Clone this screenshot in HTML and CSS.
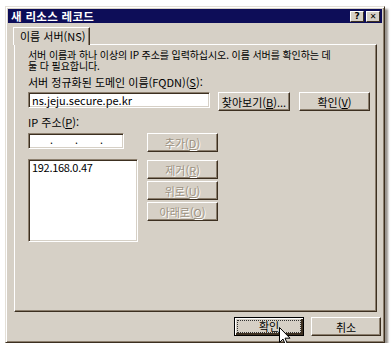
FILE: index.html
```html
<!DOCTYPE html>
<html lang="ko">
<head>
	<meta charset="UTF-8">
	<title>새 리소스 레코드</title>
	<link rel="stylesheet" href="styles.css">
</head>
<body>
	<div class="window">
		<div class="titlebar">
			<span class="title">새 리소스 레코드</span>
			<div class="tb-btns">
				<span class="tb-btn">?</span>
				<span class="tb-btn close">&#x2715;</span>
			</div>
		</div>
		<div class="tabs">
			<div class="tab">이름 서버(NS)</div>
		</div>
		<div class="panel">
			<p class="desc">서버 이름과 하나 이상의 IP 주소를 입력하십시오. 이름 서버를 확인하는 데<br>둘 다 필요합니다.</p>
			<div class="label">서버 정규화된 도메인 이름(FQDN)(<u>S</u>):</div>
			<div class="fqdn-row">
				<div class="field fqdn">ns.jeju.secure.pe.kr</div>
				<button class="btn browse">찾아보기(<u>B</u>)...</button>
				<button class="btn check">확인(<u>V</u>)</button>
			</div>
			<div class="label">IP 주소(<u>P</u>):</div>
			<div class="ip-area">
				<div class="ip-left">
					<div class="field ip"><span>.</span><span>.</span><span>.</span></div>
					<div class="field list">192.168.0.47</div>
				</div>
				<div class="ip-btns">
					<button class="btn off add">추가(<u>D</u>)</button>
					<button class="btn off">제거(<u>R</u>)</button>
					<button class="btn off">위로(<u>U</u>)</button>
					<button class="btn off">아래로(<u>O</u>)</button>
				</div>
			</div>
		</div>
		<div class="footer">
			<button class="btn default"><span class="focus">확인</span></button>
			<button class="btn">취소</button>
		</div>
		<svg class="cursor" width="12" height="19" viewBox="0 0 12 19">
			<path d="M0.5 0.5 L0.5 15.5 L4 12 L6.5 18 L8.5 17 L6 11.2 L11 11.2 Z" fill="#fff" stroke="#000" stroke-width="1"/>
		</svg>
	</div>
</body>
</html>
```

FILE: styles.css
```css
body{
	margin:0;
	background:#fff;
	font-family:"Noto Sans CJK KR","Noto Sans",sans-serif;
	font-size:10.5px;
	color:#000;
}
.window{
	position:relative;
	margin:6px 0 0 5px;
	width:380px;
	height:337px;
	box-sizing:border-box;
	padding:2px;
	background:#d6d0c6;
	border:1px solid;
	border-color:#e4e0d8 #3c2f20 #3c2f20 #e4e0d8;
	box-shadow:inset 1px 1px #fff, inset -1px -1px #8c7f6e, 3px 3px 2px rgba(70,60,50,.55);
	display:flex;
	flex-direction:column;
}
.titlebar{
	height:14px;
	background:#0d0d58;
	display:flex;
	align-items:center;
	justify-content:space-between;
	padding:0 2px 0 3px;
}
.title{
	color:#fff;
	font-weight:bold;
	font-size:11.5px;
	line-height:14px;
	letter-spacing:0.3px;
}
.tb-btns{
	display:flex;
	gap:2px;
}
.tb-btn{
	width:14px;
	height:11px;
	box-sizing:border-box;
	background:#d6d0c6;
	border:1px solid;
	border-color:#fff #3c2f20 #3c2f20 #fff;
	font-family:"DejaVu Sans",sans-serif;
	font-weight:bold;
	font-size:9px;
	line-height:9px;
	text-align:center;
}
.tb-btn.close{
	font-size:8px;
}
.tabs{
	margin-top:4px;
	padding-left:5px;
	display:flex;
	position:relative;
	z-index:1;
}
.tab{
	height:18px;
	width:77px;
	box-sizing:border-box;
	margin-bottom:-1px;
	background:#d6d0c6;
	border:1px solid;
	border-bottom:none;
	border-color:#fff #3c2f20 #d6d0c6 #fff;
	box-shadow:inset -1px 0 #8c7f6e;
	line-height:16px;
	padding-left:6px;
	font-size:11px;
}
.panel{
	height:268px;
	margin:0 5px 0 6px;
	box-sizing:border-box;
	border:1px solid;
	border-color:#fff #3c2f20 #3c2f20 #fff;
	box-shadow:inset -1px -1px #8c7f6e;
	padding:4px 0 0 13px;
}
.desc{
	margin:0;
	font-size:10px;
	line-height:11px;
	letter-spacing:-0.1px;
}
.label{
	margin-top:5px;
	line-height:12px;
	font-size:11px;
}
u{
	text-decoration:underline;
	text-underline-offset:1px;
}
.field{
	background:#fff;
	box-sizing:border-box;
	border:1px solid;
	border-color:#8c7f6e #fff #fff #8c7f6e;
	box-shadow:inset 1px 1px #3c2f20, inset -1px -1px #d6d0c6;
}
.fqdn-row{
	display:flex;
	align-items:flex-start;
	margin-top:4px;
}
.fqdn{
	width:182px;
	height:16px;
	line-height:14px;
	padding-left:3px;
	font-size:11px;
}
.btn{
	font-family:inherit;
	font-size:11px;
	color:#000;
	height:19px;
	box-sizing:border-box;
	padding:0;
	background:#d6d0c6;
	border:1px solid;
	border-color:#fff #3c2f20 #3c2f20 #fff;
	box-shadow:inset -1px -1px #8c7f6e;
	line-height:16px;
	text-align:center;
}
.browse{
	width:72px;
	margin-left:8px;
}
.check{
	width:71px;
	margin-left:9px;
}
.ip-area{
	display:flex;
	margin-top:5px;
}
.ip-left{
	display:flex;
	flex-direction:column;
	gap:10px;
	width:110px;
}
.ip{
	width:96px;
	height:16px;
	display:flex;
	justify-content:space-between;
	padding:0 20px 0 21px;
	line-height:12px;
}
.list{
	height:83px;
	padding:1px 3px;
	line-height:12px;
	font-size:11px;
	letter-spacing:-0.3px;
}
.ip-btns{
	display:flex;
	flex-direction:column;
	gap:2px;
	margin-left:9px;
}
.ip-btns .btn{
	width:71px;
	height:19px;
}
.ip-btns .add{
	margin-bottom:6px;
}
.btn.off{
	color:#9c9282;
	text-shadow:1px 1px #fff;
}
.footer{
	display:flex;
	justify-content:flex-end;
	gap:7px;
	margin-top:5px;
	padding-right:1px;
}
.footer .btn{
	width:70px;
}
.footer .btn.default{
	border:1px solid #000;
	box-shadow:inset 1px 1px #fff, inset -2px -2px #3c2f20;
	padding:2px;
}
.focus{
	display:block;
	height:13px;
	line-height:12px;
	outline:1px dotted #333;
	outline-offset:-1px;
}
.cursor{
	position:absolute;
	left:273px;
	top:320px;
	z-index:2;
}
```
